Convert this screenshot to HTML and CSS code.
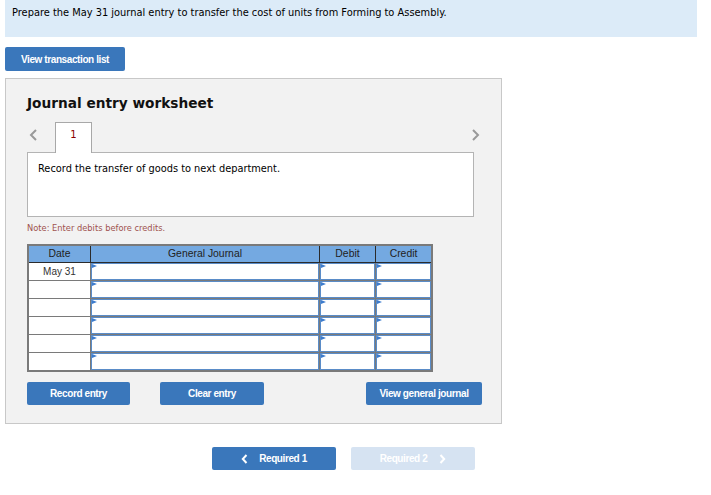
FILE: index.html
```html
<!DOCTYPE html>
<html>
<head>
<meta charset="utf-8">
<link rel="stylesheet" href="styles.css">
</head>
<body>
<div class="banner">Prepare the May 31 journal entry to transfer the cost of units from Forming to Assembly.</div>
<button class="btn btn-top">View transaction list</button>
<div class="panel">
  <h2 class="title">Journal entry worksheet</h2>
  <div class="tabs">
    <span class="chev chev-left"><svg width="9" height="12" viewBox="0 0 9 12"><path d="M7 1 L2 6 L7 11" fill="none" stroke="#999" stroke-width="2"/></svg></span>
    <span class="tab">1</span>
    <span class="spacer"></span>
    <span class="chev chev-right"><svg width="9" height="12" viewBox="0 0 9 12"><path d="M2 1 L7 6 L2 11" fill="none" stroke="#999" stroke-width="2"/></svg></span>
  </div>
  <div class="box">Record the transfer of goods to next department.</div>
  <div class="note">Note: Enter debits before credits.</div>
  <table class="jt">
    <thead>
      <tr><th class="c-date">Date</th><th class="c-gj">General Journal</th><th class="c-dr">Debit</th><th class="c-cr">Credit</th></tr>
    </thead>
    <tbody>
      <tr><td class="date">May 31</td><td class="in"><div class="field"></div></td><td class="in"><div class="field"></div></td><td class="in"><div class="field"></div></td></tr>
      <tr><td class="date"></td><td class="in"><div class="field"></div></td><td class="in"><div class="field"></div></td><td class="in"><div class="field"></div></td></tr>
      <tr><td class="date"></td><td class="in"><div class="field"></div></td><td class="in"><div class="field"></div></td><td class="in"><div class="field"></div></td></tr>
      <tr><td class="date"></td><td class="in"><div class="field"></div></td><td class="in"><div class="field"></div></td><td class="in"><div class="field"></div></td></tr>
      <tr><td class="date"></td><td class="in"><div class="field"></div></td><td class="in"><div class="field"></div></td><td class="in"><div class="field"></div></td></tr>
      <tr><td class="date"></td><td class="in"><div class="field"></div></td><td class="in"><div class="field"></div></td><td class="in"><div class="field"></div></td></tr>
    </tbody>
  </table>
  <div class="actions">
    <button class="btn btn-record">Record entry</button>
    <button class="btn btn-clear">Clear entry</button>
    <span class="spacer"></span>
    <button class="btn btn-view">View general journal</button>
  </div>
</div>
<div class="nav">
  <button class="btn btn-req1"><svg class="nav-chev" width="7" height="10" viewBox="0 0 7 10"><path d="M5.5 1 L1.8 5 L5.5 9" fill="none" stroke="#fff" stroke-width="2"/></svg>Required 1</button>
  <button class="btn btn-req2">Required 2<svg class="nav-chev2" width="7" height="10" viewBox="0 0 7 10"><path d="M1.5 1 L5.2 5 L1.5 9" fill="none" stroke="#fff" stroke-width="2"/></svg></button>
</div>
</body>
</html>
```
FILE: styles.css
```css
body {
  margin: 0;
  font-family: "DejaVu Sans", Verdana, sans-serif;
  color: #000;
  background: #fff;
}
.banner {
  margin: 0 14px 0 5px;
  height: 37px;
  box-sizing: border-box;
  padding: 7px 7px;
  background: #dcebf8;
  font-size: 9.85px;
  line-height: 12px;
}
.btn {
  display: flex;
  align-items: center;
  justify-content: center;
  border: none;
  border-radius: 2px;
  background: #3a77bb;
  color: #fff;
  font-family: "Liberation Sans", Arial, sans-serif;
  font-weight: bold;
  font-size: 10px;
  letter-spacing: -0.4px;
  padding: 0;
  height: 24px;
}
.btn-top {
  margin: 10px 0 0 5px;
  width: 120px;
}
.panel {
  margin: 7px 0 0 5px;
  width: 497px;
  height: 346px;
  box-sizing: border-box;
  border: 1px solid #c8c8c8;
  background: #f2f2f2;
  padding: 15px 0 0 21px;
}
.title {
  margin: 0;
  font-size: 13.7px;
  line-height: 18px;
  font-weight: bold;
  color: #111;
}
.tabs {
  display: flex;
  align-items: flex-start;
  margin-top: 10px;
  width: 455px;
  height: 30px;
}
.chev {
  display: block;
  height: 12px;
}
.chev-left {
  margin: 4px 0 0 2px;
}
.tab {
  display: block;
  margin-left: 17px;
  width: 37px;
  height: 31px;
  box-sizing: border-box;
  border: 1px solid #a8a8a8;
  border-bottom: none;
  background: #fff;
  color: #8b0000;
  font-size: 10px;
  text-align: center;
  line-height: 24px;
  position: relative;
  z-index: 1;
}
.spacer {
  flex: 1;
}
.chev-right {
  margin: 4px 2px 0 0;
}
.box {
  width: 447px;
  height: 65px;
  box-sizing: border-box;
  border: 1px solid #b4b4b4;
  background: #fff;
  padding: 10px 0 0 10px;
  font-size: 9.8px;
  line-height: 12px;
}
.note {
  margin-top: 6px;
  font-size: 8.3px;
  line-height: 10px;
  color: #a0524f;
}
.jt {
  margin-top: 11px;
  border-collapse: collapse;
  border: 2px solid #7a7a7a;
  font-family: "Liberation Sans", Arial, sans-serif;
  font-size: 10px;
  table-layout: fixed;
  width: 401px;
}
.jt th {
  background: #74a9e1;
  height: 16px;
  padding: 0;
  font-weight: normal;
  color: #222;
  border: 1px solid #2b2b2b;
  border-top: 2px solid #7a7a7a;
  font-size: 10.4px;
  line-height: 16px;
}
.c-date { width: 61px; }
.c-gj { width: 228px; }
.c-dr { width: 55px; }
.c-cr { width: 55px; }
.jt td {
  height: 17px;
  padding: 0;
  border: 1px solid #7a7a7a;
  background: #fff;
}
.jt td.date {
  text-align: center;
  color: #333;
  vertical-align: top;
  line-height: 17px;
}
.jt td.in {
  padding: 0;
  background: #fff;
}
.field {
  position: relative;
  height: 17px;
  box-sizing: border-box;
  border: 1px solid #5a8cc8;
  background: #fff;
}
.field::before {
  content: "";
  position: absolute;
  left: 0;
  top: 0;
  border-left: 5px solid #3d7ccd;
  border-top: 2px solid transparent;
  border-bottom: 2px solid transparent;
}
.actions {
  display: flex;
  margin-top: 10px;
  width: 455px;
}
.btn-record { width: 103px; height: 23px; }
.btn-clear { width: 104px; height: 23px; margin-left: 30px; }
.btn-view { width: 116px; height: 23px; }
.nav {
  display: flex;
  margin: 23px 0 0 212px;
}
.btn-req1 { width: 124px; height: 23px; }
.btn-req2 {
  width: 124px;
  height: 23px;
  margin-left: 15px;
  background: #d6e3f2;
  color: #fff;
}
.nav-chev { margin-right: 11px; }
.nav-chev2 { margin-left: 12px; }
```
